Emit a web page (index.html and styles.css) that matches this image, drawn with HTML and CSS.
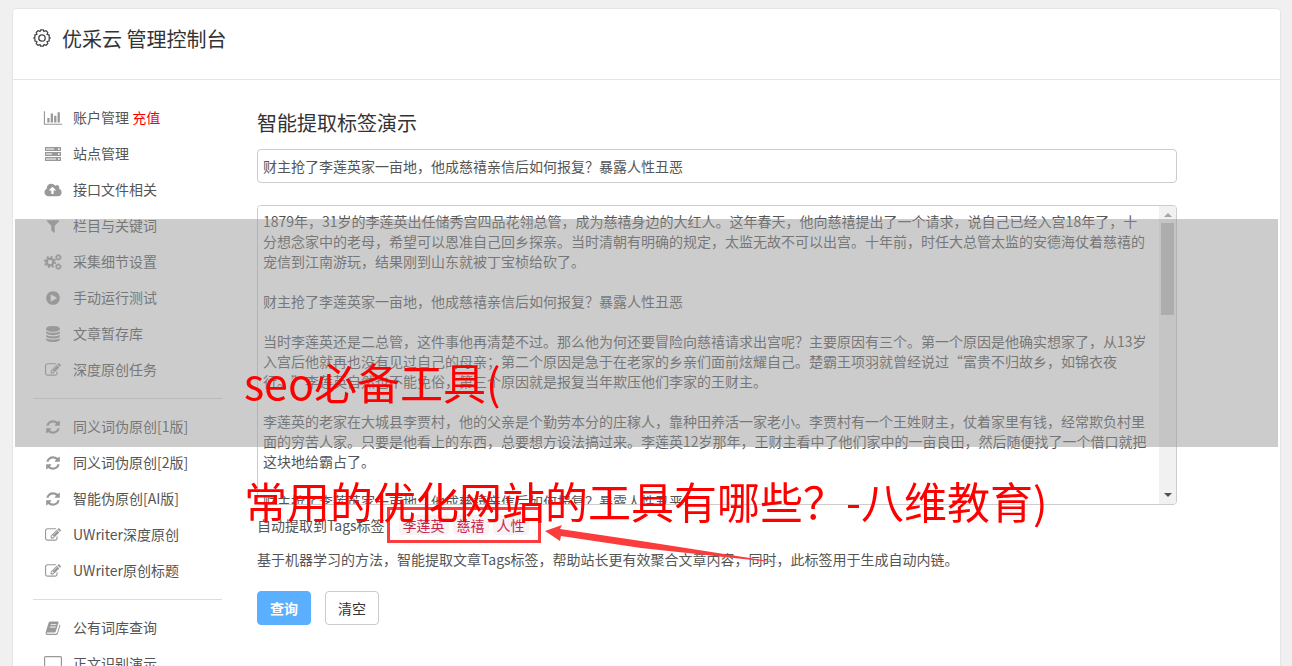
FILE: index.html
```html
<!DOCTYPE html>
<html lang="zh-CN">
<head>
<meta charset="utf-8">
<title>优采云 管理控制台</title>
<link rel="stylesheet" href="styles.css">
</head>
<body>
<svg class="sprite" aria-hidden="true">
  <symbol id="i-chart" viewBox="0 0 2048 1792"><path d="M640 896v512H384V896h256zm384-512v1024H768V384h256zm1024 1152v128H0V128h128v1408h1920zm-640-896v768h-256V640h256zm384-384v1152h-256V256h256z"/></symbol>
  <symbol id="i-server" viewBox="0 0 16 16"><path fill-rule="evenodd" d="M0 1h16v4H0zM1 2.400v1.200h8V2.400zM13 2.200v1.600h1.600V2.200zM0 6h16v4H0zM1 7.400v1.200h6V7.400zM13 7.200v1.600h1.600V7.200zM0 11h16v4H0zM1 12.400v1.200h10v-1.200zM13 12.200v1.600h1.600v-1.600z"/></symbol>
  <symbol id="i-cloud" viewBox="0 0 1920 1792"><path d="M1280 928q0-14-9-23L919 553q-9-9-23-9t-23 9L522 904q-10 12-10 24 0 14 9 23t23 9h224v352q0 13 9.500 22.500t22.500 9.500h192q13 0 22.500-9.500t9.500-22.500V960h224q13 0 22.500-9.500t9.500-22.500zm640 288q0 159-112.500 271.500T1536 1600H448q-185 0-316.500-131.500T0 1152q0-130 70-240t188-165q-2-30-2-43 0-212 150-362t362-150q156 0 285.500 87T1242 410q71-62 166-62 106 0 181 75t75 181q0 76-41 138 130 31 213.500 135.500T1920 1216z"/></symbol>
  <symbol id="i-filter" viewBox="0 0 1792 1792"><path d="M1595 295q17 41-14 70l-493 493v742q0 42-39 59-13 5-25 5-27 0-45-19l-256-256q-19-19-19-45V858L211 365q-31-29-14-70 17-39 59-39h1280q42 0 59 39z"/></symbol>
  <symbol id="i-cogs" viewBox="0 0 18 16"><g fill="none" stroke="currentColor"><circle cx="6" cy="8" r="3.400" stroke-width="2.400"/><circle cx="6" cy="8" r="5.200" stroke-width="1.800" stroke-dasharray="2.040 2.044"/><circle cx="14.300" cy="3.400" r="1.900" stroke-width="1.400"/><circle cx="14.300" cy="3.400" r="2.900" stroke-width="1" stroke-dasharray="1.140 1.137"/><circle cx="14.300" cy="12.600" r="1.900" stroke-width="1.400"/><circle cx="14.300" cy="12.600" r="2.900" stroke-width="1" stroke-dasharray="1.140 1.137"/></g></symbol>
  <symbol id="i-play" viewBox="0 0 1792 1792"><path d="M896 128q209 0 385.500 103T1561 510.500 1664 896t-103 385.500-279.500 279.500T896 1664t-385.500-103T231 1281.500 128 896t103-385.500T510.500 231 896 128zm384 823q32-18 32-55t-32-55L736 521q-31-19-64-1-32 19-32 56v640q0 37 32 56 16 8 32 8 17 0 32-9z"/></symbol>
  <symbol id="i-db" viewBox="0 0 1792 1792"><path d="M896 768q237 0 443-43t325-127v170q0 69-103 128t-280 93.500-385 34.500-385-34.500T231 896 128 768V598q119 84 325 127t443 43zm0 768q237 0 443-43t325-127v170q0 69-103 128t-280 93.500-385 34.500-385-34.500-280-93.500-103-128v-170q119 84 325 127t443 43zm0-384q237 0 443-43t325-127v170q0 69-103 128t-280 93.500-385 34.500-385-34.500-280-93.500-103-128V982q119 84 325 127t443 43zM896 0q208 0 385 34.500t280 93.500 103 128v128q0 69-103 128t-280 93.500T896 640t-385-34.500T231 512 128 384V256q0-69 103-128t280-93.500T896 0z"/></symbol>
  <symbol id="i-edit" viewBox="0 0 1792 1792"><path d="M888 1184l116-116-152-152-116 116v56h96v96h56zm440-720q-16-16-33 1L945 815q-17 17-1 33t33-1l350-350q17-17 1-33zm80 594v190q0 119-84.500 203.500T1120 1536H288q-119 0-203.500-84.500T0 1248V416q0-119 84.500-203.500T288 128h832q63 0 117 25 15 7 18 23 3 17-9 29l-49 49q-14 14-32 8-23-6-45-6H288q-66 0-113 47t-47 113v832q0 66 47 113t113 47h832q66 0 113-47t47-113v-126q0-13 9-22l64-64q15-15 35-7t20 29zm-96-738l288 288-672 672H640V992zm444 132l-92 92-288-288 92-92q28-28 68-28t68 28l152 152q28 28 28 68t-28 68z"/></symbol>
  <symbol id="i-refresh" viewBox="0 0 1792 1792"><path d="M1639 1056q0 5-1 7-64 268-268 434.500T892 1664q-146 0-282.500-55T366 1452l-129 129q-19 19-45 19t-45-19-19-45v-448q0-26 19-45t45-19h448q26 0 45 19t19 45-19 45l-137 137q71 66 161 102t187 36q134 0 250-65t186-179q11-17 53-117 8-23 30-23h192q13 0 22.500 9.500t9.500 22.500zm25-800v448q0 26-19 45t-45 19h-448q-26 0-45-19t-19-45 19-45l138-138Q1097 384 896 384q-134 0-250 65T460 628q-11 17-53 117-8 23-30 23H178q-13 0-22.500-9.500T146 736v-7q65-268 270-434.500T896 128q146 0 284 55.500T1425 340l130-129q19-19 45-19t45 19 19 45z"/></symbol>
  <symbol id="i-book" viewBox="0 0 16 16"><path fill-rule="evenodd" d="M5 1.500h7.600q1.300 0 .9 1.300l-2.600 8.500q-.3 1.200-1.600 1.200H1.900q-.5.900.8 1.200h8.100q1 0 1.300-.9l2.600-8.600q.9.500.6 1.500l-2.500 8.100q-.4 1.300-1.800 1.300H2.500Q.2 14.600.7 12.200L3.500 3Q3.900 1.500 5 1.500zM5.900 4.200l-.3.900h5.700l.3-.9zM5.200 6.500l-.3.900h5.700l.3-.9z"/></symbol>
  <symbol id="i-screen" viewBox="0 0 18 16"><path fill-rule="evenodd" d="M1.500 0h15Q18 0 18 1.500v10q0 1.500-1.500 1.500H11v2h2v1H5v-1h2v-2H1.500Q0 13 0 11.500v-10Q0 0 1.500 0zM1.200 1.200v9h15.600v-9z"/></symbol>
</svg>

<div class="panel">
  <header class="panel-head">
    <svg class="gear" viewBox="0 0 18 18" aria-hidden="true"><circle cx="9" cy="9" r="3.200"/><path d="M7.700.8h2.600l.7 1.700 2-.8 1.800 1.700-.7 1.900 2 .6v2.400L17.300 9l-1.200.7v2.300l-2 .7.700 1.900-1.800 1.700-2-.8-.7 1.700H7.700L7 15.500l-2 .8-1.800-1.700.7-1.900-2-.7V9.700L.7 9l1.200-.7V5.900l2-.6-.7-1.900L5 1.700l2 .8z"/></svg>
    <h1 class="brand">优采云 管理控制台</h1>
  </header>

  <div class="panel-body">
    <nav class="side">
      <a class="item" href="#"><svg class="ico"><use href="#i-chart"/></svg><span>账户管理 <em class="hot">充值</em></span></a>
      <a class="item" href="#"><svg class="ico"><use href="#i-server"/></svg><span>站点管理</span></a>
      <a class="item" href="#"><svg class="ico"><use href="#i-cloud"/></svg><span>接口文件相关</span></a>
      <a class="item" href="#"><svg class="ico"><use href="#i-filter"/></svg><span>栏目与关键词</span></a>
      <a class="item" href="#"><svg class="ico"><use href="#i-cogs"/></svg><span>采集细节设置</span></a>
      <a class="item" href="#"><svg class="ico"><use href="#i-play"/></svg><span>手动运行测试</span></a>
      <a class="item" href="#"><svg class="ico"><use href="#i-db"/></svg><span>文章暂存库</span></a>
      <a class="item" href="#"><svg class="ico"><use href="#i-edit"/></svg><span>深度原创任务</span></a>
      <hr class="rule">
      <a class="item" href="#"><svg class="ico"><use href="#i-refresh"/></svg><span>同义词伪原创[1版]</span></a>
      <a class="item" href="#"><svg class="ico"><use href="#i-refresh"/></svg><span>同义词伪原创[2版]</span></a>
      <a class="item" href="#"><svg class="ico"><use href="#i-refresh"/></svg><span>智能伪原创[AI版]</span></a>
      <a class="item" href="#"><svg class="ico"><use href="#i-edit"/></svg><span>UWriter深度原创</span></a>
      <a class="item" href="#"><svg class="ico"><use href="#i-edit"/></svg><span>UWriter原创标题</span></a>
      <hr class="rule">
      <a class="item" href="#"><svg class="ico"><use href="#i-book"/></svg><span>公有词库查询</span></a>
      <a class="item" href="#"><svg class="ico"><use href="#i-screen"/></svg><span>正文识别演示</span></a>
    </nav>

    <main class="main">
      <h2 class="title">智能提取标签演示</h2>
      <input class="field" type="text" aria-label="标题" value="财主抢了李莲英家一亩地，他成慈禧亲信后如何报复？暴露人性丑恶">
      <div class="editor">
        <textarea class="text" aria-label="正文">1879年，31岁的李莲英出任储秀宫四品花翎总管，成为慈禧身边的大红人。这年春天，他向慈禧提出了一个请求，说自己已经入宫18年了，十分想念家中的老母，希望可以恩准自己回乡探亲。当时清朝有明确的规定，太监无故不可以出宫。十年前，时任大总管太监的安德海仗着慈禧的宠信到江南游玩，结果刚到山东就被丁宝桢给砍了。

财主抢了李莲英家一亩地，他成慈禧亲信后如何报复？暴露人性丑恶

当时李莲英还是二总管，这件事他再清楚不过。那么他为何还要冒险向慈禧请求出宫呢？主要原因有三个。第一个原因是他确实想家了，从13岁入宫后他就再也没有见过自己的母亲；第二个原因是急于在老家的乡亲们面前炫耀自己。楚霸王项羽就曾经说过“富贵不归故乡，如锦衣夜行。”李莲英自然也不能免俗，第三个原因就是报复当年欺压他们李家的王财主。

李莲英的老家在大城县李贾村，他的父亲是个勤劳本分的庄稼人，靠种田养活一家老小。李贾村有一个王姓财主，仗着家里有钱，经常欺负村里面的穷苦人家。只要是他看上的东西，总要想方设法搞过来。李莲英12岁那年，王财主看中了他们家中的一亩良田，然后随便找了一个借口就把这块地给霸占了。

财主抢了李莲英家一亩地，他成慈禧亲信后如何报复？暴露人性丑恶</textarea>
        <div class="bar" aria-hidden="true">
          <i class="arrow up"></i>
          <i class="thumb"></i>
          <i class="arrow down"></i>
        </div>
      </div>
      <p class="tags-line">自动提取到Tags标签：<span class="tags"><code class="tag">李莲英</code><code class="tag">慈禧</code><code class="tag">人性</code><svg class="pointer" viewBox="0 0 240 42" aria-hidden="true"><path d="M4 8 21 2 19 6 100 18 240 40 100 25 20 13 19 18z"/></svg></span></p>
      <p class="note">基于机器学习的方法，智能提取文章Tags标签，帮助站长更有效聚合文章内容，同时，此标签用于生成自动内链。</p>
      <div class="actions">
        <button class="btn primary" type="button">查询</button>
        <button class="btn" type="button">清空</button>
      </div>
    </main>
  </div>
</div>

<div class="caption">
  <p class="caption-line">seo必备工具(</p>
  <p class="caption-line">常用的优化网站的工具有哪些？-八维教育)</p>
</div>
</body>
</html>
```
FILE: styles.css
```css
* {
  box-sizing: border-box;
}

body {
  position: relative;
  height: 100vh;
  margin: 0;
  padding: 8px 11px 0 12px;
  overflow: hidden;
  background: #f0f0f0;
  color: #555;
  font: 14px/20px "Noto Sans CJK SC", sans-serif;
  text-spacing-trim: space-all;
}

h1,
h2,
p {
  margin: 0;
  font-weight: 400;
}

input,
textarea,
button {
  color: inherit;
  font: inherit;
}

.sprite {
  position: absolute;
  width: 0;
  height: 0;
}

.panel {
  border: 1px solid #e5e5e5;
  border-radius: 4px;
  background: #fff;
}

.panel-head {
  display: flex;
  align-items: center;
  gap: 11px;
  padding: 15px 20px 25px;
  border-bottom: 1px solid #e5e5e5;
}

.gear {
  width: 18px;
  height: 18px;
  margin-bottom: 2px;
  fill: none;
  stroke: #444;
  stroke-width: 1.3;
  stroke-linejoin: round;
}

.brand {
  color: #333;
  font-size: 20px;
  line-height: 30px;
}

.panel-body {
  display: flex;
  gap: 35px;
  padding: 20px 103px 20px 20px;
}

.side {
  flex: 0 0 189px;
}

.item {
  display: flex;
  gap: 10px;
  padding: 7px 0 9px 10px;
  color: #555;
  text-decoration: none;
  white-space: nowrap;
}

.ico {
  width: 20px;
  height: 16px;
  margin-top: 3px;
  color: #999;
  fill: currentColor;
}

.hot {
  color: #f00;
  font-style: normal;
}

.rule {
  margin: 10px 0;
  border: 0;
  border-top: 1px solid #ddd;
}

.main {
  flex: 1;
  min-width: 0;
  padding-top: 8px;
}

.title {
  margin-bottom: 11px;
  color: #333;
  font-size: 20px;
  line-height: 30px;
}

.field {
  display: block;
  width: 100%;
  height: 34px;
  margin-bottom: 22px;
  padding: 5px;
  border: 1px solid #ccc;
  border-radius: 4px;
  background: #fff;
}

.editor {
  display: flex;
  height: 300px;
  margin-bottom: 10px;
  overflow: hidden;
  border: 1px solid #ccc;
  border-radius: 4px;
}

.text {
  flex: 1;
  padding: 5px 10px 5px 5px;
  border: 0;
  background: #fff;
  resize: none;
  scrollbar-width: none;
}

.bar {
  display: flex;
  flex-direction: column;
  align-items: center;
  width: 17px;
  padding: 7px 2px;
  background: #f1f1f1;
}

.arrow {
  border: 4px solid transparent;
}

.up {
  margin-bottom: 6px;
  border-top: 0;
  border-bottom-color: #a3a3a3;
}

.down {
  margin-top: auto;
  border-bottom: 0;
  border-top-color: #505050;
}

.thumb {
  width: 13px;
  height: 92px;
  background: #c1c1c1;
}

.tags-line {
  display: flex;
  margin-bottom: 14px;
}

.tags {
  position: relative;
  display: flex;
  gap: 4px;
}

.tags::after {
  position: absolute;
  inset: -8px -12px;
  border: 3px solid #fa3c3c;
  content: "";
}

.tag {
  padding: 0 4px;
  border-radius: 4px;
  background: #f7f2f4;
  color: #c7254e;
  font: inherit;
}

.pointer {
  position: absolute;
  top: 8px;
  left: 100%;
  width: 240px;
  height: 42px;
  margin-left: 12px;
  fill: #fa3c3c;
}

.note {
  margin-bottom: 22px;
}

.actions {
  display: flex;
  gap: 14px;
}

.btn {
  padding: 6px 12px;
  border: 1px solid #ccc;
  border-radius: 4px;
  background: #fff;
  color: #333;
}

.primary {
  border-color: #5aafff;
  background: #5aafff;
  color: #fff;
  font-weight: 700;
}

.caption {
  position: absolute;
  top: 219px;
  right: 14px;
  left: 15px;
  height: 228px;
  padding: 103px 0 0 229px;
  background: rgba(153, 153, 153, 0.5);
  pointer-events: none;
}

.caption-line {
  color: #f00;
  font-size: 43px;
  line-height: 119px;
  white-space: nowrap;
}
```
